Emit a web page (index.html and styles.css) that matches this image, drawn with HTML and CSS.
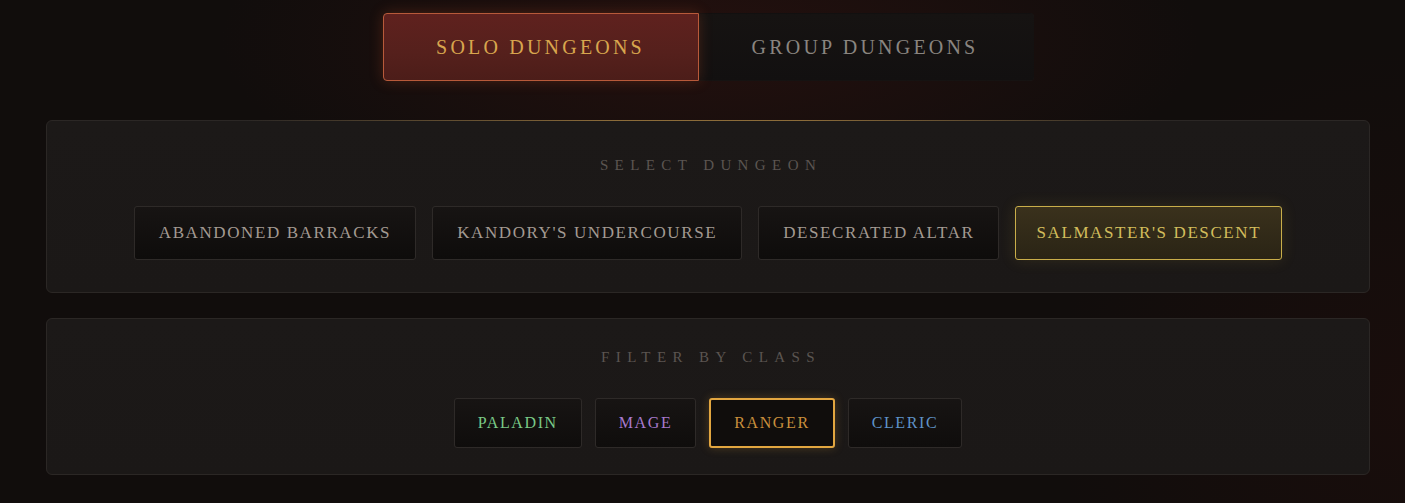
FILE: index.html
```html
<!DOCTYPE html>
<html lang="en">
<head>
<meta charset="utf-8">
<title>Dungeons</title>
<link rel="stylesheet" href="styles.css">
</head>
<body>
<div class="page">
  <div class="tabs">
    <button class="tab tab-active">Solo Dungeons</button>
    <button class="tab">Group Dungeons</button>
  </div>

  <section class="panel panel-dungeon">
    <h2 class="panel-title">Select Dungeon</h2>
    <div class="options">
      <button class="opt">Abandoned Barracks</button>
      <button class="opt">Kandory's Undercourse</button>
      <button class="opt">Desecrated Altar</button>
      <button class="opt opt-active">Salmaster's Descent</button>
    </div>
  </section>

  <section class="panel panel-class">
    <h2 class="panel-title">Filter by Class</h2>
    <div class="options options-class">
      <button class="cls cls-paladin">Paladin</button>
      <button class="cls cls-mage">Mage</button>
      <button class="cls cls-ranger cls-active">Ranger</button>
      <button class="cls cls-cleric">Cleric</button>
    </div>
  </section>
</div>
</body>
</html>
```
FILE: styles.css
```css
* { box-sizing: border-box; }
html, body { margin: 0; height: 100%; }
body {
  background:
    radial-gradient(ellipse 700px 260px at 710px 40px, rgba(70, 22, 18, 0.35), rgba(0,0,0,0) 70%),
    radial-gradient(ellipse 500px 500px at 1405px 400px, rgba(40, 14, 12, 0.35), rgba(0,0,0,0) 70%),
    #110d0c;
  font-family: "Liberation Serif", "DejaVu Serif", serif;
  overflow: hidden;
}
.page {
  padding: 13px 35px 0 46px;
  display: flex;
  flex-direction: column;
  align-items: stretch;
}
button { font-family: inherit; cursor: pointer; }

.tabs {
  display: flex;
  justify-content: center;
  align-self: center;
  border: 1px solid #2a2523;
  border-radius: 4px;
}
.tab {
  height: 68px;
  margin: -1px;
  border: 1px solid transparent;
  background: linear-gradient(180deg, #161312, #121010);
  color: #8a8580;
  text-transform: uppercase;
  font-size: 20px;
  letter-spacing: 3.2px;
  padding: 0;
  width: 337px;
  border-radius: 0 4px 4px 0;
}
.tab-active {
  width: 316px;
  background: linear-gradient(180deg, #5f211e 0%, #55201c 60%, #4c1d19 100%);
  border-color: #b85a3a;
  color: #d8a64e;
  border-radius: 4px 0 0 4px;
  box-shadow: 0 0 14px rgba(190, 80, 40, 0.28);
  position: relative;
  z-index: 1;
}

.panel {
  position: relative;
  border: 1px solid #2b2725;
  border-radius: 6px;
  background: linear-gradient(180deg, #1c1918, #1b1817);
  display: flex;
  flex-direction: column;
  align-items: center;
}
.panel-dungeon {
  margin-top: 39px;
  padding: 32px 0 32px;
}
.panel-dungeon::before {
  content: "";
  position: absolute;
  top: -1px;
  left: 15%;
  right: 15%;
  height: 1px;
  background: linear-gradient(90deg, rgba(140,110,60,0), rgba(150,115,60,0.9) 40%, rgba(150,115,60,0.9) 60%, rgba(140,110,60,0));
}
.panel-class {
  margin-top: 25px;
  padding: 26px 0 26px;
}
.panel-title {
  margin: 0 0 29px;
  font-weight: normal;
  font-size: 15px;
  line-height: 24px;
  letter-spacing: 6.4px;
  color: #5b5551;
  text-transform: uppercase;
  padding-left: 6px;
}
.options {
  display: flex;
  justify-content: center;
  gap: 16px;
}
.opt {
  height: 54px;
  padding: 0 24px;
  border: 1px solid #2e2a28;
  border-radius: 3px;
  background: linear-gradient(180deg, #171413 0%, #0e0c0b 100%);
  color: #a39a92;
  font-size: 17px;
  letter-spacing: 1.6px;
  text-transform: uppercase;
}
.opt-active {
  padding: 0 20px;
  border-color: #c9ae4a;
  background: linear-gradient(180deg, #3a311c 0%, #2a2415 100%);
  color: #d2bd5c;
  box-shadow: 0 0 16px rgba(200, 170, 60, 0.14);
}
.options-class { gap: 13px; }
.cls {
  height: 50px;
  padding: 0 23px;
  border: 1px solid #2e2a28;
  border-radius: 3px;
  background: linear-gradient(180deg, #171413 0%, #0f0d0c 100%);
  font-size: 16px;
  letter-spacing: 1.6px;
  text-transform: uppercase;
}
.cls-paladin { color: #7ac987; }
.cls-mage { color: #a77acd; }
.cls-ranger { color: #c98f3c; }
.cls-cleric { color: #5f93c8; }
.cls-active {
  border: 2px solid #e2a640;
  background: #100d0c;
  box-shadow: 0 0 10px rgba(226, 166, 64, 0.25);
}
```
